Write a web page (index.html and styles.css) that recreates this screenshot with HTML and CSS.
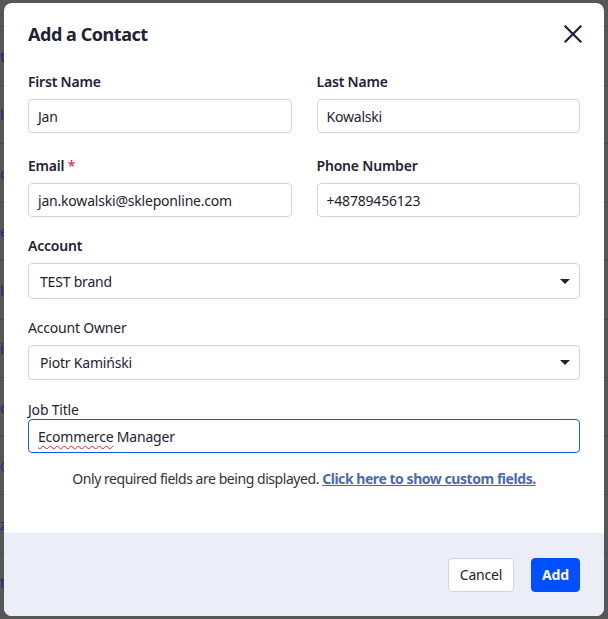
FILE: index.html
```html
<!DOCTYPE html>
<html lang="en">
<head>
<meta charset="utf-8">
<title>Add a Contact</title>
<link rel="stylesheet" href="styles.css">
</head>
<body>
<div class="page">
  <div class="bg-row"><span>t</span></div>
  <div class="bg-row"><span>l</span></div>
  <div class="bg-row"><span>o</span></div>
  <div class="bg-row"><span>e</span></div>
  <div class="bg-row"><span>l</span></div>
  <div class="bg-row"><span>i</span></div>
  <div class="bg-row"><span>c</span></div>
  <div class="bg-row"><span>@</span></div>
  <div class="bg-row"><span>z</span></div>
  <div class="bg-row"><span>t</span></div>
</div>

<div class="modal">
  <div class="modal-body">
    <div class="modal-header">
      <h1 class="modal-title">Add a Contact</h1>
      <button class="close-btn" aria-label="Close">
        <svg width="20" height="20" viewBox="0 0 20 20"><path d="M2.5 2.5 L17.5 17.5 M17.5 2.5 L2.5 17.5" stroke="#1f2233" stroke-width="2.2" stroke-linecap="square" fill="none"/></svg>
      </button>
    </div>

    <div class="grid row-1">
      <div class="field">
        <label class="label">First Name</label>
        <div class="input">Jan</div>
      </div>
      <div class="field">
        <label class="label">Last Name</label>
        <div class="input">Kowalski</div>
      </div>
    </div>

    <div class="grid row-2">
      <div class="field">
        <label class="label">Email <span class="req">*</span></label>
        <div class="input">jan.kowalski@skleponline.com</div>
      </div>
      <div class="field">
        <label class="label">Phone Number</label>
        <div class="input">+48789456123</div>
      </div>
    </div>

    <div class="field row-3">
      <label class="label">Account</label>
      <div class="select"><span>TEST brand</span><span class="caret"></span></div>
    </div>

    <div class="field row-4">
      <label class="label label-light">Account Owner</label>
      <div class="select select-owner"><span>Piotr Kamiński</span><span class="caret"></span></div>
    </div>

    <div class="field row-5">
      <label class="label label-light label-tight">Job Title</label>
      <div class="input input-focus"><span class="spell">Ecommerce</span> Manager</div>
    </div>

    <p class="note">Only required fields are being displayed. <a class="note-link" href="#">Click here to show custom fields.</a></p>
  </div>

  <div class="modal-footer">
    <button class="btn btn-cancel">Cancel</button>
    <button class="btn btn-add">Add</button>
  </div>
</div>
</body>
</html>
```

FILE: styles.css
```css
* { box-sizing: border-box; }

html, body {
  margin: 0;
  padding: 0;
  width: 608px;
  height: 619px;
  overflow: hidden;
  background: #575757;
  font-family: "Noto Sans", "Liberation Sans", sans-serif;
}

.page {
  padding-top: 26px;
}

.bg-row {
  height: 58.5px;
  border-top: 1px solid #4a4a4a;
  display: flex;
  align-items: center;
  font-size: 15px;
  color: #1b2a78;
  padding-left: 0;
}

.modal {
  position: absolute;
  left: 4px;
  top: 3px;
  width: 600px;
  height: 613px;
  background: #ffffff;
  border-radius: 8px;
  overflow: hidden;
  display: flex;
  flex-direction: column;
  color: #1f2233;
}

.modal-body {
  flex: 1;
  padding: 0 24px;
}

.modal-header {
  height: 62px;
  display: flex;
  align-items: center;
  justify-content: space-between;
}

.modal-title {
  margin: 0;
  font-size: 18px;
  font-weight: 700;
  line-height: 24px;
  color: #1f2233;
  letter-spacing: -0.45px;
}

.close-btn {
  border: 0;
  background: none;
  padding: 0;
  margin-right: -3px;
  width: 20px;
  height: 20px;
  display: flex;
}

.grid {
  display: grid;
  grid-template-columns: 1fr 1fr;
  column-gap: 25px;
}

.row-1 { margin-top: 7px; }
.row-2 { margin-top: 23px; }
.row-3 { margin-top: 19px; }
.row-4 { margin-top: 19px; }
.row-5 { margin-top: 20px; }

.field {
  display: flex;
  flex-direction: column;
}

.label {
  font-size: 14px;
  line-height: 20px;
  font-weight: 600;
  color: #1f2233;
  margin-bottom: 7px;
  letter-spacing: -0.2px;
}

.label-light {
  font-weight: 400;
}

.label-tight {
  margin-bottom: -1px;
}

.req {
  color: #e8345f;
}

.input {
  height: 34px;
  border: 1px solid #cfd3e2;
  border-radius: 4px;
  padding: 0 9px;
  display: flex;
  align-items: center;
  font-size: 14px;
  color: #1f2233;
  white-space: pre;
  letter-spacing: -0.2px;
}

.input-focus {
  border: 1.5px solid #1456f0;
  height: 34px;
}

.spell {
  text-decoration: underline wavy #e02020;
  text-decoration-thickness: 1px;
  text-underline-offset: 3px;
}

.select {
  height: 36px;
  border: 1px solid #cfd3e2;
  border-radius: 4px;
  padding: 0 9px 0 11px;
  display: flex;
  align-items: center;
  justify-content: space-between;
  font-size: 14px;
  color: #1f2233;
  letter-spacing: -0.2px;
}

.select-owner {
  height: 35px;
}

.caret {
  width: 0;
  height: 0;
  border-left: 5px solid transparent;
  border-right: 5px solid transparent;
  border-top: 5px solid #1f2233;
}

.note {
  margin: 16px 0 0;
  text-align: center;
  font-size: 14px;
  line-height: 20px;
  color: #333;
  letter-spacing: -0.45px;
}

.note-link {
  color: #4b6aae;
  font-weight: 700;
  text-decoration: underline;
}

.modal-footer {
  height: 83px;
  background: #ebeef6;
  display: flex;
  justify-content: flex-end;
  align-items: center;
  gap: 17px;
  padding: 0 24px;
}

.btn {
  height: 34px;
  border-radius: 4px;
  font-family: inherit;
  font-size: 14px;
  padding: 0;
  letter-spacing: -0.2px;
}

.btn-cancel {
  background: #ffffff;
  border: 1px solid #cfd3e2;
  color: #1f2233;
  width: 66px;
}

.btn-add {
  background: #0050ff;
  border: 1px solid #0050ff;
  color: #ffffff;
  font-weight: 700;
  width: 49px;
}
```
